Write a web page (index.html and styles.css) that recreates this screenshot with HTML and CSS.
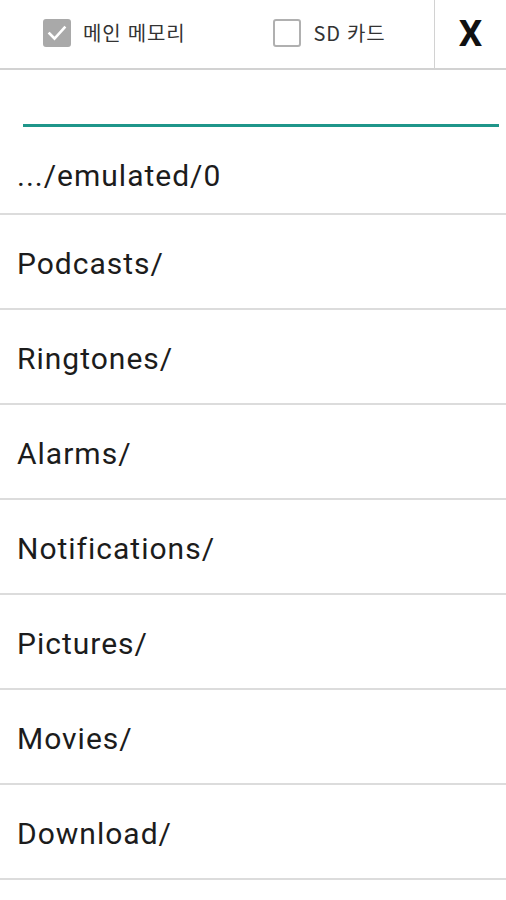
FILE: index.html
```html
<!DOCTYPE html>
<html lang="ko">
<head>
<meta charset="utf-8">
<link rel="stylesheet" href="styles.css">
</head>
<body>
<div class="screen">
  <header class="topbar">
    <div class="options">
      <label class="opt opt-main">
        <span class="box checked">
          <svg viewBox="0 0 28 28" width="28" height="28"><path d="M6.5 14.5 L11.5 19.5 L21.5 8.5" fill="none" stroke="#fff" stroke-width="2.6" stroke-linecap="square"/></svg>
        </span>
        <span class="opt-label">메인 메모리</span>
      </label>
      <label class="opt opt-sd">
        <span class="box"></span>
        <span class="opt-label">SD 카드</span>
      </label>
    </div>
    <div class="close">X</div>
  </header>
  <div class="search">
    <div class="field"></div>
  </div>
  <ul class="list">
    <li class="row first">.../emulated/0</li>
    <li class="row">Podcasts/</li>
    <li class="row">Ringtones/</li>
    <li class="row">Alarms/</li>
    <li class="row">Notifications/</li>
    <li class="row">Pictures/</li>
    <li class="row">Movies/</li>
    <li class="row">Download/</li>
  </ul>
</div>
</body>
</html>
```
FILE: styles.css
```css
* { box-sizing: border-box; }
html, body { margin: 0; padding: 0; background: #fff; }
body { font-family: Roboto, "Noto Sans", "Noto Sans CJK KR", sans-serif; color: #1a1a1a; }
.screen { width: 506px; height: 900px; overflow: hidden; }

.topbar {
  display: flex;
  height: 70px;
  border-bottom: 2px solid #d2d2d2;
}
.options {
  flex: 1;
  display: flex;
  align-items: center;
  padding-left: 43px;
  padding-bottom: 2px;
}
.opt { display: flex; align-items: center; }
.opt-sd { margin-left: 88px; }
.box {
  width: 28px; height: 28px;
  border: 2px solid #b0b0b0;
  border-radius: 3px;
  display: block;
}
.box.checked { background: #a9a9a9; border-color: #a9a9a9; position: relative; }
.box.checked svg { position: absolute; left: -2px; top: -2px; }
.opt-label {
  margin-left: 12px;
  font-family: "Noto Sans CJK KR", sans-serif;
  font-size: 20px;
  letter-spacing: 0.8px;
  color: #333;
  line-height: 1;
}
.close {
  width: 72px;
  border-left: 1px solid #d2d2d2;
  display: flex;
  align-items: center;
  justify-content: center;
  font-family: Roboto, "Liberation Sans", sans-serif;
  font-weight: 700;
  font-size: 37px;
  color: #111;
  padding-bottom: 2px;
}

.search { height: 70px; padding: 54px 7px 0 23px; }
.field { height: 3px; background: #1f968a; }

.list { list-style: none; margin: 0; padding: 0; }
.row {
  height: 95px;
  border-bottom: 2px solid #dcdcdc;
  display: flex;
  align-items: center;
  padding-left: 17px;
  padding-top: 4px;
  font-size: 30px;
  letter-spacing: 1px;
  color: #1c1c1c;
}
.row.first { height: 75px; padding-top: 0; padding-bottom: 2px; }
```
